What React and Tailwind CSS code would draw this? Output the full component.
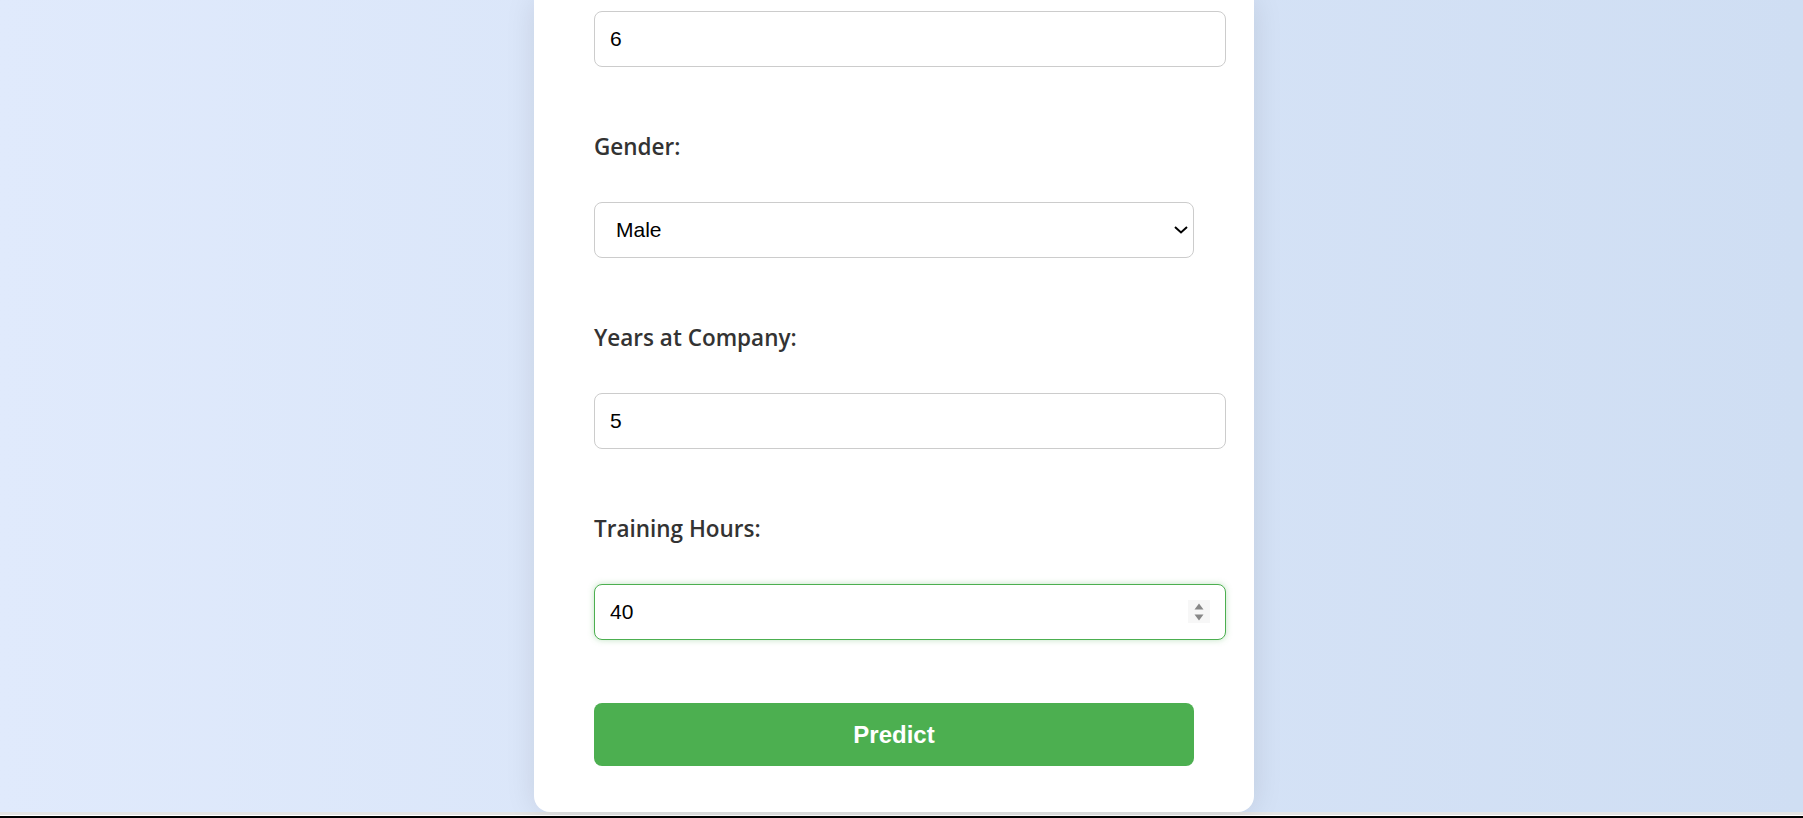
export default function App() {
  const label = "block h-[32px] leading-[36px] mt-[62px] mb-[41px] text-[22.5px] font-semibold text-[#333] font-['Open_Sans',sans-serif]";
  const input =
    "block box-border w-[632px] h-[56px] px-[15px] border border-[#ccc] rounded-lg bg-white text-[21px] text-black font-['Liberation_Sans',Arial,sans-serif] outline-none";

  return (
    <div className="w-full h-[818px] overflow-hidden">
      <div className="h-[812px] bg-linear-to-r from-[#e0eafc] to-[#cfdef3] flex justify-center pr-[15px]">
        <div className="w-[720px] h-[812px] box-border bg-white rounded-b-2xl shadow-[0_0_30px_rgba(0,0,0,0.1)] px-[60px] pt-[11px]">
          {/* Age / experience */}
          <input className={input} defaultValue="6" />

          {/* Gender */}
          <label className={label}>Gender:</label>
          <div className="relative w-[600px]">
            <select
              defaultValue="Male"
              className="block box-border w-[600px] h-[56px] pl-[21px] pr-[40px] border border-[#ccc] rounded-lg bg-white text-[21px] text-black font-['Liberation_Sans',Arial,sans-serif] appearance-none outline-none"
            >
              <option>Male</option>
              <option>Female</option>
            </select>
            <svg
              className="absolute right-[6px] top-1/2 -translate-y-1/2 w-[14px] h-[8px] pointer-events-none"
              viewBox="0 0 14 8"
              fill="none"
              stroke="black"
              strokeWidth={2}
            >
              <path d="M1 1l6 5.5L13 1" />
            </svg>
          </div>

          {/* Years */}
          <label className={label}>Years at Company:</label>
          <input className={input} defaultValue="5" />

          {/* Training */}
          <label className={label}>Training Hours:</label>
          <div className="relative w-[632px]">
            <input
              className={input + " !border-[#4caf50] shadow-[0_0_6px_rgba(76,175,80,0.35)]"}
              defaultValue="40"
            />
            <div className="absolute right-[16px] top-[16px] w-[22px] h-[23px] bg-[#f7f7f7] flex flex-col items-center justify-center gap-[4px]">
              <svg width="10" height="7" viewBox="0 0 10 7">
                <path d="M5 0.5L9.5 6.5H0.5Z" fill="#888" />
              </svg>
              <svg width="10" height="7" viewBox="0 0 10 7">
                <path d="M0.5 0.5H9.5L5 6.5Z" fill="#888" />
              </svg>
            </div>
          </div>

          <button className="block mt-[63px] w-[600px] h-[63px] rounded-lg bg-[#4caf50] text-white text-[24px] font-bold font-['Liberation_Sans',Arial,sans-serif]">
            Predict
          </button>
        </div>
      </div>
      <div className="h-[3px] bg-[#e4e4e4]" />
      <div className="h-[1px] bg-white" />
      <div className="h-[2px] bg-black" />
    </div>
  );
}
